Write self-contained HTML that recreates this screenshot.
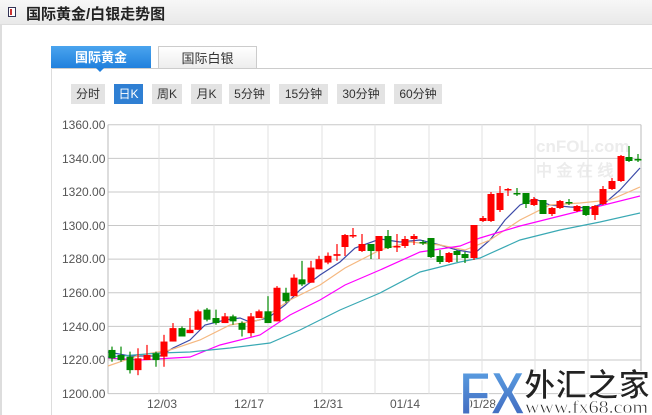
<!DOCTYPE html>
<html><head><meta charset="utf-8">
<style>
*{margin:0;padding:0;box-sizing:border-box}
body{width:652px;height:415px;overflow:hidden;background:#fff;font-family:"Liberation Sans","Noto Sans CJK SC",sans-serif;position:relative}
.hdr{position:absolute;left:0;top:0;width:652px;height:25px;background:linear-gradient(#f7f7f7,#e9e9e9);border-bottom:1px solid #ddd}
.hdr .ic{position:absolute;left:8px;top:7px;width:8px;height:10px;border:1px solid #335;background:#fff}
.hdr .ic:after{content:"";position:absolute;left:1px;top:1px;width:2px;height:6px;background:#c33}
.hdr span{position:absolute;left:26px;top:3px;font-size:15px;font-weight:bold;color:#222}
.lb{position:absolute;left:0;top:25px;width:2px;height:390px;background:#ddd}
.tab{position:absolute;top:46px;height:23px;font-size:13px;text-align:center;line-height:23px}
.t1{left:51px;width:100px;background:linear-gradient(#4aa4ee,#1f7fdc);color:#fff;font-weight:bold}
.t2{left:158px;width:99px;background:linear-gradient(#fff,#ececec);border:1px solid #ccc;border-bottom:none;color:#333}
.line{position:absolute;left:51px;top:68px;width:601px;height:1px;background:#ccc}
.vl{position:absolute;left:51px;top:68px;width:1px;height:347px;background:#ddd}
.arr{position:absolute;left:96px;top:68px;border:4px solid transparent;border-top:4px solid #1f7fdc}
.btn{position:absolute;top:84px;height:20px;line-height:20px;font-size:12px;background:#e3e3e3;color:#333;text-align:center}
.btn.on{background:#2f7fd3;color:#fff}
</style></head><body>
<div class="hdr"><div class="ic"></div><span>国际黄金/白银走势图</span></div>
<div class="lb"></div>
<div class="tab t1">国际黄金</div><div class="tab t2">国际白银</div>
<div class="line"></div><div class="vl"></div><div class="arr"></div>
<div class="btn" style="left:71px;width:34px">分时</div>
<div class="btn on" style="left:114px;width:29px">日K</div>
<div class="btn" style="left:152px;width:30px">周K</div>
<div class="btn" style="left:191px;width:31px">月K</div>
<div class="btn" style="left:229px;width:41px">5分钟</div>
<div class="btn" style="left:279px;width:49px">15分钟</div>
<div class="btn" style="left:337px;width:48px">30分钟</div>
<div class="btn" style="left:394px;width:48px">60分钟</div>
<svg id="c" width="652" height="415" style="position:absolute;left:0;top:0" xmlns="http://www.w3.org/2000/svg">
<defs><linearGradient id="fg" x1="0" y1="0" x2="0" y2="1"><stop offset="0" stop-color="#5fa8e8"/><stop offset="1" stop-color="#3c5fb8"/></linearGradient></defs>
<g font-family="Liberation Sans, sans-serif" font-size="12" fill="#555">
<text x="62" y="129">1360.00</text><text x="62" y="163">1340.00</text><text x="62" y="196">1320.00</text><text x="62" y="230">1300.00</text><text x="62" y="263">1280.00</text><text x="62" y="297">1260.00</text><text x="62" y="331">1240.00</text><text x="62" y="364">1220.00</text><text x="62" y="398">1200.00</text>
<text x="147" y="408">12/03</text><text x="234" y="408">12/17</text><text x="313" y="408">12/31</text><text x="390" y="408">01/14</text><text x="466" y="408">01/28</text>
</g>
<g font-family="Liberation Sans, sans-serif" font-weight="bold" fill="#ececec"><text x="536" y="152" font-size="17">cnFOL.com</text><text x="536" y="176" font-size="16">中 金 在 线</text></g>
<g id="grid"></g><g id="ma"></g><g id="k"></g>
<g font-family="Liberation Sans, sans-serif"><text x="459" y="414" font-size="60" font-weight="bold" fill="url(#fg)" stroke="#fff" stroke-width="1.5" textLength="66" lengthAdjust="spacingAndGlyphs">FX</text>
<text x="524" y="396" font-size="32" font-weight="bold" fill="#222" font-family="Noto Sans CJK SC, sans-serif" stroke="#fff" stroke-width="1" textLength="126" lengthAdjust="spacingAndGlyphs">外汇之家</text>
<text x="525" y="413" font-size="18" fill="#222" font-family="Liberation Serif, serif" stroke="#fff" stroke-width="0.5" textLength="123" lengthAdjust="spacingAndGlyphs">www.fx68.com</text></g>
</svg>
<script>
var ns="http://www.w3.org/2000/svg";function el(p,t,a){var e=document.createElementNS(ns,t);for(var k in a)e.setAttribute(k,a[k]);document.getElementById(p).appendChild(e);}
var T=124.7,S=1.681;function Y(p){return T+(1360-p)*S;}
for(var i=0;i<9;i++){var y=Y(1360-i*20);el("grid","line",{x1:108,x2:641,y1:y,y2:y,stroke:"#c8c8c8"});}
[159,214,268,322,375,429,482,535,588].forEach(function(x){el("grid","line",{x1:x,x2:x,y1:T,y2:393.7,stroke:"#e2e2e2"});});
el("grid","line",{x1:108,x2:108,y1:T,y2:393.7,stroke:"#bbb"});el("grid","line",{x1:641,x2:641,y1:T,y2:393.7,stroke:"#bbb"});
var P=[[112,1226,1221,1228,1219],[121,1223,1220,1228,1219],[130,1222,1214,1225,1212],[138,1214,1221,1227,1211],[147,1220,1223,1229,1220],[156,1224,1220,1225,1216],[164,1222,1231,1235,1216],[173,1231,1239,1242,1231],[182,1239,1234,1240,1234],[190,1236,1238,1245,1236],[198,1238,1249,1250,1238],[207,1250,1244,1251,1243],[216,1245,1242,1250,1241],[225,1242,1246,1248,1242],[233,1246,1243,1247,1241],[242,1242,1238,1243,1234],[251,1236,1246,1248,1234],[259,1245,1249,1250,1245],[268,1249,1242,1258,1242],[277,1243,1263,1264,1243],[286,1260,1255,1263,1254],[294,1258,1269,1271,1258],[302,1268,1265,1279,1264],[311,1266,1275,1279,1266],[319,1274,1280,1282,1274],[328,1278,1282,1284,1277],[337,1282,1283,1289,1279]];
P.forEach(function(c){draw(c[0],Y(c[1]),Y(c[2]),Y(c[3]),Y(c[4]));});
var Q=[[345,247,235,234,256],[353,236,235,228,238],[362,251,244,234,252],[371,244,251,244,259],[379,251,236,236,259],[388,236,248,230,249],[397,247,246,234,252],[405,246,239,236,248],[414,239,236,234,245],[423,242,243,240,245],[431,238,257,238,258],[440,256,262,250,264],[449,262,253,252,263],[457,251,255,250,262],[465,254,258,252,263],[474,258,225,225,260],[483,221,218,216,222],[491,221,194,192,222],[500,210,193,186,212],[508,190,189,188,196],[517,193,194,188,196],[526,193,204,193,208],[534,205,199,197,206],[543,200,214,200,214],[552,214,208,207,216],[560,208,201,200,209],[569,202,202,199,205],[577,211,206,205,212],[586,206,215,206,216],[595,215,206,205,220],[603,204,189,186,205],[612,189,181,178,190],[621,181,156,155,182],[629,157,161,146,162],[638,159,160,154,162]];
Q.forEach(function(c){draw(c[0],c[1],c[2],c[3],c[4]);});
function draw(x,o,cl,h,l){var up=cl<o;var col=up?"#f00":"#080";var top=Math.min(o,cl),hh=Math.max(Math.abs(o-cl),1.5);
el("k","line",{x1:x,x2:x,y1:h,y2:l,stroke:col,"stroke-width":1.2});el("k","rect",{x:x-3.5,y:top,width:7,height:hh,fill:col});}
var M=[["#3c4aa8","108,352 130,356 160,356 173,348 190,340 205,325 225,320 240,318 250,322 268,318 285,305 300,290 320,275 340,262 355,248 380,239 400,242 420,240 440,245 457,250 475,253 490,240 505,220 520,205 535,199 550,205 570,207 590,208 605,203 620,190 640,168"],
["#f5b880","108,366 140,355 170,350 200,340 230,325 260,320 290,300 320,285 345,268 380,250 410,242 440,245 465,250 490,240 520,220 550,205 580,203 610,200 640,187"],
["#f0f","108,358 140,360 190,357 220,345 260,335 290,315 320,300 345,285 380,270 420,252 460,246 480,238 520,226 560,216 600,206 640,196"],
["#3aa9b4","108,357 160,353 190,352 230,348 270,343 300,330 340,310 380,293 420,272 460,262 480,258 520,240 560,230 600,222 640,213"]];
M.forEach(function(m){el("ma","polyline",{points:m[1],fill:"none",stroke:m[0],"stroke-width":1.2});});
</script>
</body></html>
